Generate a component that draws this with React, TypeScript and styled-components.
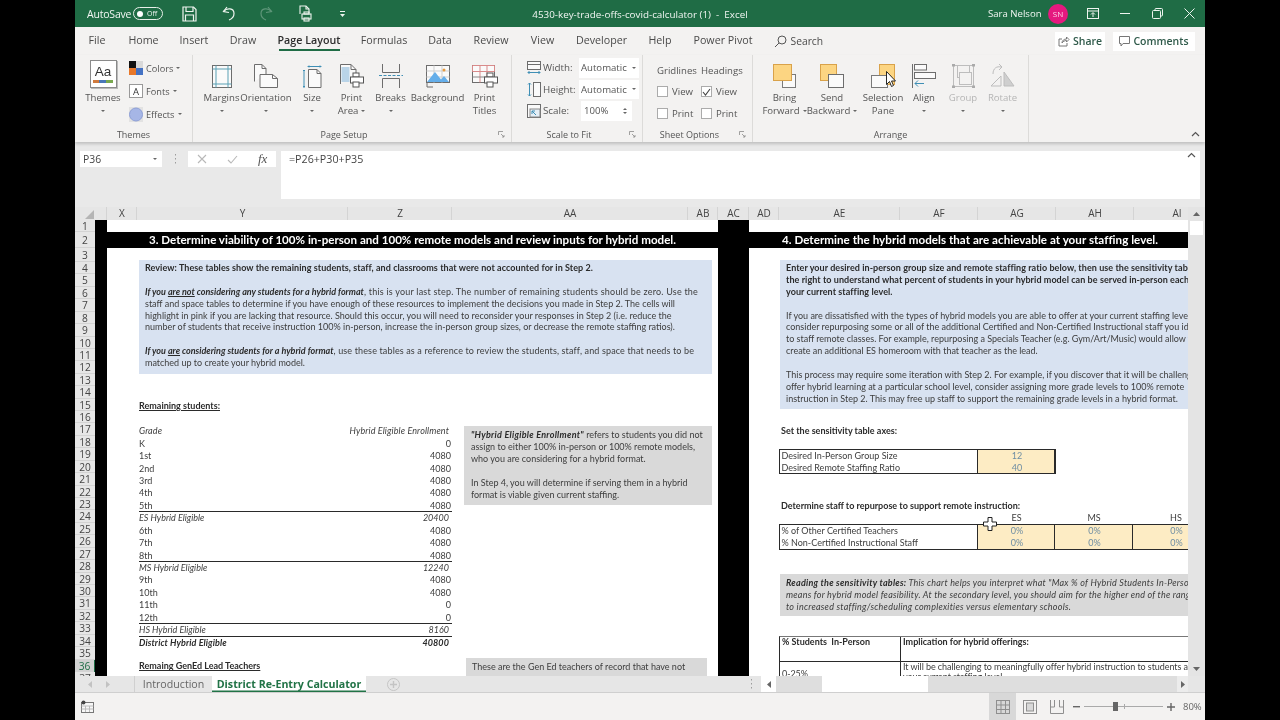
import React from 'react';
import styled, { createGlobalStyle } from 'styled-components';

const UI = `"Open Sans","Noto Sans",sans-serif`;
const CELL = `Lato,"Open Sans",sans-serif`;

const GlobalStyle = createGlobalStyle`
  html,body{margin:0;padding:0;background:#000;}
  *{box-sizing:border-box;}
`;

const Screen = styled.div`
  width:1280px;height:720px;background:#000;display:flex;justify-content:center;overflow:hidden;
`;
const Win = styled.div`
  position:relative;width:1130px;height:720px;background:#f3f2f1;display:flex;flex-direction:column;overflow:hidden;
  font-family:${UI};color:#444;filter:blur(0.3px);
`;

/* title bar */
const TitleBar = styled.div`
  height:27px;background:#1f6c45;color:#f2f6f3;display:flex;align-items:center;font-size:10.5px;position:relative;flex:none;
`;
const QuickItem = styled.div<{ $w: number; $o?: number }>`
  width:${p => p.$w}px;display:flex;justify-content:center;align-items:center;opacity:${p => p.$o ?? 1};flex:none;
`;
const AutoSave = styled.span`margin-left:12px;width:46px;flex:none;white-space:nowrap;letter-spacing:-0.2px;`;
const Toggle = styled.div`
  width:30px;height:13px;border:1px solid #e8efe9;border-radius:7px;display:flex;align-items:center;gap:4px;padding-left:3px;flex:none;
  font-size:7px;line-height:1;
`;
const Knob = styled.i`width:6px;height:6px;border-radius:50%;background:#fff;display:block;`;
const DocTitle = styled.div`
  position:absolute;left:0;right:0;text-align:center;font-size:9.85px;white-space:pre;pointer-events:none;
`;
const RightBox = styled.div`margin-left:auto;display:flex;align-items:center;`;
const UserName = styled.span`font-size:9.6px;width:60px;white-space:nowrap;`;
const Avatar = styled.div`
  width:20px;height:20px;border-radius:50%;background:#e5197f;color:#fbd3e6;font-size:8px;display:flex;align-items:center;justify-content:center;margin-right:9px;
`;

/* tabs */
const TabBar = styled.div`
  height:28px;display:flex;align-items:center;padding-left:12.5px;gap:22.5px;font-size:10.7px;flex:none;position:relative;color:#4a4a4a;
`;
const Tab = styled.div<{ $active?: boolean; $w: number }>`
  width:${p => p.$w}px;white-space:nowrap;text-align:center;position:relative;height:28px;line-height:27px;flex:none;display:flex;justify-content:center;
  font-weight:${p => (p.$active ? 600 : 400)};color:${p => (p.$active ? '#2d2d2d' : 'inherit')};
  ${p => p.$active && `&:after{content:"";position:absolute;left:0;right:0;bottom:4px;height:2px;background:#1f6c45;}`}
`;
const SearchBox = styled.div`display:flex;align-items:center;gap:4px;width:50px;flex:none;font-size:10.3px;margin-left:-1px;`;
const TabRight = styled.div`margin-left:auto;display:flex;gap:8px;margin-right:10px;margin-top:0;`;
const TopBtn = styled.div<{ $w: number }>`
  width:${p => p.$w}px;height:19px;background:#fff;display:flex;align-items:center;justify-content:center;gap:3px;
  font-size:10.5px;font-weight:600;color:#2f5a4a;white-space:nowrap;
`;

/* ribbon */
const Ribbon = styled.div`
  height:87px;display:flex;flex:none;box-shadow:0 2px 3px rgba(0,0,0,.18);position:relative;z-index:1;background:#f3f2f1;
`;
const Group = styled.div<{ $w?: number }>`
  ${p => (p.$w ? `width:${p.$w}px;flex:none;` : 'flex:1;')}
  display:flex;flex-direction:column;margin:0;position:relative;
  border-right:${p => (p.$w ? '1px solid #dcdbd9' : 'none')};
`;
const GroupBody = styled.div<{ $pad?: number }>`
  flex:1;display:flex;padding-left:${p => p.$pad ?? 0}px;min-height:0;
`;
const GroupFoot = styled.div`
  height:15px;display:flex;align-items:center;font-size:9px;color:#555;margin-bottom:0;padding-bottom:1px;
`;
const FootText = styled.div`flex:1;text-align:center;white-space:nowrap;`;
const Launcher = styled.div`width:12px;display:flex;justify-content:center;flex:none;margin-right:4px;`;
const BigBtn = styled.div<{ $w: number; $dim?: boolean }>`
  width:${p => p.$w}px;flex:none;display:flex;flex-direction:column;align-items:center;
  color:${p => (p.$dim ? '#b5b5b5' : '#555')};font-size:9.6px;
`;
const IconSlot = styled.div`height:36px;display:flex;align-items:flex-end;justify-content:center;padding-bottom:3px;flex:none;`;
const BtnLine = styled.div`height:13px;line-height:13px;white-space:nowrap;display:flex;align-items:center;gap:3px;`;
const Caret = styled.i`
  display:block;width:0;height:0;border-left:2px solid transparent;border-right:2px solid transparent;border-top:2.5px solid #666;flex:none;
`;
const ThemeStack = styled.div`display:flex;flex-direction:column;padding-top:5px;gap:7px;margin-left:8px;`;
const ThemeRow = styled.div`display:flex;align-items:center;gap:3px;height:16px;font-size:9.2px;color:#555;`;
const ThemeIcon = styled.div`
  width:27px;height:28px;border:1px solid #8a8a8a;background:#fff;box-shadow:1px 1px 0 #bbb;display:flex;flex-direction:column;align-items:center;
  justify-content:center;font-size:13.5px;line-height:13px;color:#333;font-family:"Liberation Sans",sans-serif;
`;
const ThemeStrip = styled.i`display:block;width:20px;height:2.5px;background:linear-gradient(90deg,#d07b3e 0 30%,#4a77b8 30% 65%,#79a84e 65%);margin-top:2px;`;
const FontA = styled.div`
  width:14px;height:14px;border:1px solid #999;background:#fff;display:flex;align-items:center;justify-content:center;font-size:9.5px;color:#333;
`;

/* scale to fit */
const ScaleCol = styled.div`display:flex;flex-direction:column;padding:2px 0 0 15px;gap:0;`;
const ScaleRow = styled.div`display:flex;align-items:center;height:21.5px;font-size:9.8px;color:#555;white-space:nowrap;`;
const ScaleLabel = styled.span`width:36px;flex:none;margin-left:2px;`;
const SelectBox = styled.div`
  width:60px;height:19.5px;background:#fff;display:flex;align-items:center;justify-content:space-between;padding:0 3px 0 2px;font-size:9.6px;flex:none;
`;
const SpinBox = styled(SelectBox)`width:51px;margin-left:2px;padding-left:3px;height:20px;`;
const Spin = styled.div`display:flex;flex-direction:column;gap:2px;margin-right:2px;`;
const CaretUp = styled(Caret)`border-top:none;border-bottom:2.5px solid #666;`;

/* sheet options */
const OptCols = styled.div`display:flex;padding:8px 0 0 14px;gap:6px;`;
const OptCol = styled.div<{ $w: number }>`width:${p => p.$w}px;display:flex;flex-direction:column;font-size:9.6px;color:#555;flex:none;`;
const OptHead = styled.div`height:15px;line-height:15px;margin-bottom:3px;white-space:nowrap;`;
const OptRow = styled.div`height:22px;display:flex;align-items:center;gap:4px;padding-bottom:1px;`;
const Check = styled.div`
  width:11px;height:11px;background:#fff;border:1px solid #ababab;display:flex;align-items:center;justify-content:center;flex:none;
`;

/* formula bar */
const FormulaArea = styled.div`
  height:65px;background:#e9e9e9;padding:9px 5px 8px 5px;display:flex;gap:5px;flex:none;
`;
const NameBox = styled.div`
  width:82px;height:16px;background:#fff;display:flex;align-items:center;justify-content:space-between;padding:0 5px 0 3px;font-size:10.4px;color:#444;flex:none;
`;
const Dots = styled.div`width:16px;height:16px;display:flex;align-items:center;justify-content:center;flex:none;`;
const FxBox = styled.div`
  width:88px;height:16px;background:#fff;display:flex;align-items:center;padding-left:9px;gap:20px;flex:none;margin-right:0;
`;
const FxText = styled.span`font-family:"Liberation Serif",serif;font-style:italic;font-size:13px;color:#555;`;
const FormulaBox = styled.div`
  flex:1;height:48px;background:#fff;display:flex;justify-content:space-between;padding:1px 4px 0 8px;font-size:10.7px;color:#444;
`;

/* sheet */
const SheetWrap = styled.div`height:469px;display:flex;flex:none;background:#e6e6e6;`;
const SheetMain = styled.div`width:1113px;flex:none;display:flex;flex-direction:column;`;
const ColHeads = styled.div`height:13px;display:flex;flex:none;background:#e6e6e6;overflow:hidden;`;
const Corner = styled.div`width:20px;flex:none;display:flex;justify-content:flex-end;align-items:flex-end;padding:0 1px 1px 0;`;
const ColHead = styled.div<{ $w: number }>`
  width:${p => p.$w}px;flex:none;text-align:center;font-size:10px;line-height:13px;color:#444;box-shadow:inset -1px 0 0 #d4d4d4;
`;
const SheetBody = styled.div`height:456px;display:flex;overflow:hidden;background:#fff;`;
const RowHeads = styled.div`width:20px;flex:none;background:#e6e6e6;display:flex;flex-direction:column;`;
const RowHead = styled.div<{ $h: number; $on?: boolean }>`
  height:${p => p.$h}px;flex:none;text-align:center;font-size:10.2px;line-height:${p => p.$h}px;color:${p => (p.$on ? '#1f6c45' : '#444')};
  background:${p => (p.$on ? '#d2d2d2' : 'transparent')};box-shadow:inset 0 -1px 0 #d3d3d3;
  ${p => p.$on && 'border-right:1.5px solid #1f6c45;'}
`;
const BlackCol = styled.div<{ $w: number }>`width:${p => p.$w}px;flex:none;background:#000;`;
const Panel = styled.div<{ $w: number }>`
  width:${p => p.$w}px;flex:none;display:flex;flex-direction:column;overflow:hidden;background:#fff;font-family:${CELL};
  font-size:9px;color:#3d3d3d;
`;
const Band = styled.div<{ $left?: number }>`
  margin-top:12px;height:16px;background:#000;color:#fff;font-weight:700;font-size:11.6px;line-height:16px;white-space:nowrap;flex:none;
  ${p => (p.$left ? `padding-left:${p.$left}px;letter-spacing:.04px;` : 'text-align:center;')}
`;
const InfoBox = styled.div<{ $ml: number; $w: string; $h: number; $pl?: number }>`
  margin:12px 0 0 ${p => p.$ml}px;width:${p => p.$w};height:${p => p.$h}px;background:#d8e2f1;padding:2px 0 0 ${p => p.$pl ?? 6}px;flex:none;overflow:hidden;
`;
const Line = styled.div<{ $ls?: number }>`
  height:11.9px;line-height:11.9px;white-space:nowrap;letter-spacing:${p => p.$ls ?? 0}px;
`;
const B = styled.b`font-weight:700;color:#2b2b2b;letter-spacing:0.06px;`;
const BI = styled.b`font-weight:700;font-style:italic;color:#2b2b2b;letter-spacing:0;`;
const NoteBI = styled(BI)`letter-spacing:0.28px;`;
const ReadBI = styled(BI)`letter-spacing:0.25px;`;
const U = styled.span`text-decoration:underline;`;
const Split = styled.div`display:flex;flex:none;margin-left:32px;`;
const TableCol = styled.div`width:313px;flex:none;display:flex;flex-direction:column;`;
const NoteCol = styled.div`flex:1;display:flex;flex-direction:column;margin-left:12px;`;
const Heading = styled.div<{ $mt?: number }>`
  height:12.43px;line-height:12.43px;font-weight:700;text-decoration:underline;color:#2b2b2b;white-space:nowrap;margin-top:${p => p.$mt ?? 0}px;flex:none;
`;
const SectionHead = styled(Heading)`margin-left:32px;margin-top:25.5px;`;
const EnrollRow = styled.div<{ $line?: boolean; $kind?: string }>`
  height:12.43px;line-height:13.4px;display:flex;justify-content:space-between;padding-right:1px;white-space:nowrap;flex:none;
  ${p => p.$line && 'box-shadow:0 1px 0 #2a2a2a;'}
  ${p => (p.$kind === 'it' || p.$kind === 'head') && 'font-style:italic;'}
  ${p => p.$kind === 'head' && 'letter-spacing:0.12px;'}
  ${p => p.$kind === 'bi' && 'font-style:italic;font-weight:700;color:#2b2b2b;letter-spacing:0.1px;'}
`;
const EnrollValue = styled.span<{ $pr?: number }>`padding-right:${p => p.$pr ?? 0}px;`;
const Note = styled.div`
  width:248px;height:79px;background:#d9d9d9;margin-top:2px;padding:3px 0 0 7px;flex:none;
`;
const Note2 = styled.div`
  width:241px;height:30px;background:#d9d9d9;margin:153px 0 0 2px;padding:3px 0 0 6px;flex:none;
`;
const StepHead = styled.div<{ $mt: number }>`
  margin:${p => p.$mt}px 0 0 32px;height:12.4px;line-height:12.4px;font-weight:700;color:#2b2b2b;white-space:nowrap;flex:none;
`;
const StaffGrid = styled.div<{ $cols: string; $mt: number }>`
  display:grid;grid-template-columns:${p => p.$cols};margin:${p => p.$mt}px 0 0 30px;flex:none;
  border:1px solid #2a2a2a;border-right:none;
`;
const AxisGrid = styled(StaffGrid)`width:277px;border-right:1px solid #2a2a2a;`;
const GridLabel = styled.div`height:11.7px;line-height:11.7px;padding-left:1.5px;white-space:nowrap;border-right:1px solid #2a2a2a;grid-column:1;`;
const Yellow = styled.div`
  height:11.7px;line-height:11.7px;background:#fdecc4;color:#6f8ea3;text-align:center;border-right:1px solid #2a2a2a;padding-left:2px;
`;
const HeadRow = styled.div`display:grid;grid-template-columns:199px 77px 78px 86px;margin-left:30px;height:12.4px;line-height:12.4px;flex:none;`;
const HeadCell = styled.div`text-align:center;`;
const ReadBox = styled.div`
  margin:24.5px 0 0 31px;height:42px;background:#d9d9d9;padding:3px 0 0 6px;font-style:italic;overflow:hidden;flex:none;
`;
const ImplGrid = styled.div`
  margin:19.5px 0 0 30px;display:grid;grid-template-columns:121px 1fr;border-top:1px solid #777;border-left:1px solid #2a2a2a;flex:none;
`;
const ImplCell = styled.div<{ $h: number; $first?: boolean; $bold?: boolean }>`
  height:${p => p.$h}px;padding:0 0 0 2px;white-space:pre;line-height:10px;letter-spacing:-0.07px;
  ${p => p.$first && 'border-right:1px solid #2a2a2a;'}
  ${p => p.$bold && 'font-weight:700;color:#2b2b2b;letter-spacing:0;'}
`;
const ImplFirst = styled(ImplCell)`display:flex;align-items:flex-end;`;
const HeaderBottom = styled.div`grid-column:1 / -1;height:1px;background:#2a2a2a;`;

const VScroll = styled.div`width:17px;flex:none;background:#e4e4e4;display:flex;flex-direction:column;align-items:center;`;
const VArrow = styled.div`height:14px;width:100%;display:flex;align-items:center;justify-content:center;flex:none;`;
const VThumb = styled.div`width:13px;height:14px;background:#fff;flex:none;`;
const VSpace = styled.div`flex:1;`;

/* tabs bar */
const SheetTabs = styled.div`height:17px;background:#e6e6e6;border-bottom:1px solid #cfcfcf;display:flex;align-items:stretch;flex:none;`;
const TabNav = styled.div`width:60px;display:flex;align-items:center;gap:14px;padding-left:13px;flex:none;border-right:1px solid #d0d0d0;`;
const SheetTab = styled.div<{ $on?: boolean; $w: number }>`
  width:${p => p.$w}px;flex:none;text-align:center;font-size:10.65px;line-height:16px;white-space:nowrap;
  ${p => (p.$on ? 'background:#fff;color:#217346;font-weight:700;box-shadow:inset 0 -1.5px 0 #217346;' : 'color:#666;')}
`;
const PlusWrap = styled.div`width:54px;display:flex;align-items:center;justify-content:center;flex:none;`;
const HDots = styled.div`margin-left:auto;width:19px;display:flex;align-items:center;justify-content:center;flex:none;`;
const ArrowBox = styled.div<{ $w: number; $bg?: string }>`
  width:${p => p.$w}px;background:${p => p.$bg ?? '#fff'};display:flex;align-items:center;justify-content:center;flex:none;
`;
const HTrack = styled.div`width:401px;background:#dedede;display:flex;flex:none;padding-left:46px;`;
const HThumb = styled.div`width:106px;background:#fff;`;
const HEnd = styled.div`width:17px;flex:none;`;

/* status bar */
const StatusBar = styled.div`flex:1;display:flex;align-items:stretch;background:#f3f2f1;`;
const MacroWrap = styled.div`width:27px;margin-left:6px;display:flex;align-items:center;`;
const StatusRight = styled.div`margin-left:auto;display:flex;align-items:center;height:100%;`;
const ViewBtn = styled.div<{ $on?: boolean; $w: number }>`
  width:${p => p.$w}px;height:100%;display:flex;align-items:center;justify-content:center;background:${p => (p.$on ? '#d8d8d8' : 'transparent')};flex:none;
`;
const Zoomer = styled.div`display:flex;align-items:center;gap:4px;margin-left:3px;`;
const SliderTrack = styled.div`width:79px;height:1px;background:#aaa;position:relative;`;
const SliderThumb = styled.i`position:absolute;left:29px;top:-4px;width:5px;height:9px;background:#666;display:block;`;
const SliderTick = styled.i`position:absolute;left:40px;top:-2px;width:1px;height:5px;background:#aaa;display:block;`;
const ZoomText = styled.span`font-size:9.5px;color:#666;width:16px;margin-left:4px;margin-right:6px;white-space:nowrap;`;
const PointerLayer = styled.div<{ $x: number; $y: number }>`
  position:absolute;left:${p => p.$x}px;top:${p => p.$y}px;pointer-events:none;z-index:5;
`;

/* ---------- icons ---------- */
const Save = () => (
  <svg width="15" height="16" viewBox="0 0 15 16" fill="none" stroke="#eef4ef" strokeWidth="1.2">
    <path d="M1 1h10.5L14 3.5V15H1z" /><path d="M4 1v4.5h7V1" /><path d="M3.5 15V9h8v6" />
  </svg>
);
const Undo = ({ flip }: { flip?: boolean }) => (
  <svg width="13" height="15" viewBox="0 0 13 15" fill="none" stroke="#eef4ef" strokeWidth="1.2" style={flip ? { transform: 'scaleX(-1)' } : undefined}>
    <path d="M5 1L1.500 5.500 7 6.500" /><path d="M1.500 5.500C5 1.500 12 2 12 7.500c0 3-2.500 5.500-5 6.500" />
  </svg>
);
const Preview = () => (
  <svg width="13" height="17" viewBox="0 0 13 17" fill="none" stroke="#eef4ef" strokeWidth="1.1">
    <path d="M1 9V1h6l3 3v4" /><path d="M7 1v3h3" /><rect x="3" y="9" width="9" height="5" /><rect x="5" y="7" width="5" height="2" /><rect x="5" y="13" width="5" height="3" />
  </svg>
);
const QaCaret = () => (
  <svg width="7" height="6" viewBox="0 0 7 6" fill="#eef4ef"><rect x="1" y="0" width="5" height="1" /><path d="M1 3h5L3.500 6z" /></svg>
);
const RibbonDisp = () => (
  <svg width="12" height="11" viewBox="0 0 12 11" fill="none" stroke="#eef4ef"><rect x=".5" y=".5" width="11" height="10" /><path d="M.5 3h11M6 9V5M4 6.500L6 4.500l2 2" /></svg>
);
const Min = () => <svg width="10" height="2" viewBox="0 0 10 2"><rect width="10" height="1" fill="#eef4ef" /></svg>;
const Restore = () => (
  <svg width="11" height="11" viewBox="0 0 11 11" fill="none" stroke="#eef4ef"><rect x=".5" y="2.500" width="8" height="8" rx="1" /><path d="M3 2.500V1.500a1 1 0 011-1h5.500a1 1 0 011 1V7a1 1 0 01-1 1h-1" /></svg>
);
const Close = () => (
  <svg width="11" height="11" viewBox="0 0 11 11" stroke="#eef4ef"><path d="M.5.5l10 10M10.500.5l-10 10" /></svg>
);
const SearchIco = () => (
  <svg width="13" height="13" viewBox="0 0 13 13" fill="none" stroke="#555"><circle cx="8" cy="5" r="4" /><path d="M5 8L1 12" /></svg>
);
const ShareIco = () => (
  <svg width="12" height="11" viewBox="0 0 12 11" fill="none" stroke="#777"><path d="M4 3H1v7h8V7" /><path d="M4 7c0-2.500 2-4 4.500-4V1L11 3.500 8.500 6V4.500C6.500 4.500 5 5.500 4 7z" /></svg>
);
const CommentIco = () => (
  <svg width="11" height="11" viewBox="0 0 11 11" fill="none" stroke="#777"><path d="M.5.500h10v7H4L2 10V7.500H.5z" /></svg>
);
const Launch = () => (
  <svg width="7" height="7" viewBox="0 0 7 7" fill="none" stroke="#8a8a8a" strokeWidth=".8"><path d="M.5 4V.5H5M3 3l3 3M6 4v2H4" /></svg>
);
const ChevUp = () => (
  <svg width="9" height="6" viewBox="0 0 9 6" fill="none" stroke="#555" strokeWidth="1.2"><path d="M1 5l3.500-3.500L8 5" /></svg>
);
const Colors = () => (
  <svg width="14" height="14" viewBox="0 0 14 14">
    <rect width="7" height="7" fill="#111" /><rect x="7" width="7" height="7" fill="#d9d9d9" /><rect y="7" width="7" height="7" fill="#e8782a" /><rect x="7" y="7" width="7" height="7" fill="#4472c4" />
  </svg>
);
const Effects = () => (
  <svg width="14" height="15" viewBox="0 0 14 15"><rect width="14" height="15" fill="#e2e2e2" /><circle cx="7" cy="7.500" r="6.500" fill="#a6b6e6" stroke="#8d9fd6" /></svg>
);
const Margins = () => (
  <svg width="20" height="23" viewBox="0 0 20 23" fill="#fafafa" stroke="#6d6d6d">
    <rect x=".5" y=".5" width="19" height="22" /><path d="M4 .5v22M16 .5v22M.5 4h19M.5 19h19" stroke="#5aa1b5" fill="none" />
  </svg>
);
const Orientation = () => (
  <svg width="24" height="24" viewBox="0 0 24 24" fill="#fafafa" stroke="#6d6d6d">
    <path d="M.5 17.500V.5H8l4 4V10" /><path d="M8 .5v4h4" fill="none" /><path d="M6 10.500h12.500l5 4v9H6z" /><path d="M18.500 10.500v4h5" fill="none" />
  </svg>
);
const SizeIco = () => (
  <svg width="19" height="23" viewBox="0 0 19 23" fill="none">
    <path d="M5.500 22.500V4.500H14l4 4v14z" fill="#fafafa" stroke="#6d6d6d" /><path d="M14 4.500v4h4" stroke="#6d6d6d" />
    <path d="M1 5v18M0 6l1-1 1 1M0 21l1 1 1-1M5 1.500h13M6 .5l-1 1 1 1M17 .5l1 1-1 1" stroke="#3f8fb5" />
  </svg>
);
const PrintArea = () => (
  <svg width="24" height="24" viewBox="0 0 24 24" fill="none">
    <path d="M.5 20V.5H11l5 5V10" fill="#fafafa" stroke="#6d6d6d" /><rect x="1.500" y="3" width="8" height="15" fill="#b9d4e8" /><path d="M11 .5v5h5" stroke="#6d6d6d" />
    <rect x="13" y="9" width="6" height="4" fill="#fff" stroke="#555" /><rect x="10.500" y="13" width="13" height="6" fill="#fff" stroke="#555" /><rect x="13" y="18" width="6" height="5" fill="#fff" stroke="#555" />
  </svg>
);
const Breaks = () => (
  <svg width="24" height="24" viewBox="0 0 24 24" fill="none" stroke="#6d6d6d">
    <path d="M3.500 0v8.500h17V0M3.500 24v-9.500h17V24" /><path d="M0 11.500h24" stroke="#3f8fb5" strokeDasharray="3 1.500" />
  </svg>
);
const Background = () => (
  <svg width="24" height="23" viewBox="0 0 24 23" fill="none">
    <rect x=".5" y=".5" width="23" height="17" fill="#fafafa" stroke="#6d6d6d" /><path d="M8 .5v17M16 .5v17M.5 6h23M.5 12h23" stroke="#cfcfcf" />
    <path d="M1 17L9 7l8 10z" fill="#64aeea" /><path d="M13 17l5-6 5 6z" fill="#64aeea" /><circle cx="18" cy="5" r="1.500" fill="#e79a3d" />
    <path d="M1 18v4h6" stroke="#6d6d6d" />
  </svg>
);
const PrintTitles = () => (
  <svg width="26" height="23" viewBox="0 0 26 23" fill="none">
    <rect x=".5" y=".5" width="22" height="17" fill="#fafafa" stroke="#6d6d6d" /><path d="M.5.5h22v6H.5zM8 .5v17M15 .5v17" stroke="#d98b8b" /><path d="M.5 12h15" stroke="#888" />
    <rect x="15" y="8" width="6" height="4" fill="#fff" stroke="#555" /><rect x="12.500" y="12" width="13" height="6" fill="#fff" stroke="#555" /><rect x="15" y="17" width="6" height="5" fill="#fff" stroke="#555" />
  </svg>
);
const Forward = () => (
  <svg width="24" height="24" viewBox="0 0 24 24">
    <rect x="9.500" y="10.500" width="13" height="13" fill="#fafafa" stroke="#7a7a7a" />
    <rect x=".5" y=".5" width="18" height="16" fill="#fcd582" stroke="#d9a24a" />
  </svg>
);
const Backward = () => (
  <svg width="24" height="24" viewBox="0 0 24 24">
    <rect x=".5" y=".5" width="16" height="16" fill="#fcd582" stroke="#d9a24a" />
    <rect x="8.500" y="10.500" width="15" height="13" fill="#fafafa" stroke="#6d6d6d" />
  </svg>
);
const Selection = () => (
  <svg width="24" height="24" viewBox="0 0 24 24">
    <rect x="8.500" y=".5" width="15" height="20" fill="#fcd582" stroke="#d9a24a" />
    <rect x=".5" y="11.500" width="16" height="12" fill="#fafafa" stroke="#7a7a7a" />
  </svg>
);
const Align = () => (
  <svg width="25" height="24" viewBox="0 0 25 24" fill="none" stroke="#6d6d6d">
    <path d="M.5 0v24" /><rect x="2.500" y=".5" width="12" height="5.500" fill="#fafafa" /><rect x="2.500" y="8.500" width="21" height="6" fill="#fafafa" />
    <path d="M12 19.500H3M6 16.500l-3 3 3 3" stroke="#3f8fb5" />
  </svg>
);
const GroupIco = () => (
  <svg width="23" height="24" viewBox="0 0 23 24" fill="none" stroke="#bdbdbd">
    <rect x="1.500" y="1.500" width="20" height="21" /><rect x="5.500" y="1.500" width="12" height="12" fill="#f3f2f1" /><rect x="7.500" y="8.500" width="12" height="12" fill="#f3f2f1" />
    <path d="M0 1h3M20 1h3M0 23h3M20 23h3" strokeWidth="3" stroke="#aaa" />
  </svg>
);
const Rotate = () => (
  <svg width="25" height="24" viewBox="0 0 25 24" fill="none" stroke="#bdbdbd">
    <path d="M3 10C3 4 7 2 11 3M9 0l3 3-3 3" /><path d="M1 22l10-10v10z" fill="#f3f2f1" /><path d="M14 22V8l10 14z" fill="#cfcfcf" />
  </svg>
);
const WidthIco = () => (
  <svg width="14" height="14" viewBox="0 0 14 14" fill="none">
    <rect x=".5" y=".5" width="13" height="8" stroke="#6d6d6d" fill="#fafafa" /><path d="M.5 3.500h13" stroke="#6d6d6d" />
    <path d="M1 11.500h12M2.500 10L1 11.500 2.500 13M11.500 10l1.500 1.500L11.500 13" stroke="#3f8fb5" />
  </svg>
);
const HeightIco = () => (
  <svg width="14" height="15" viewBox="0 0 14 15" fill="none">
    <rect x="6.500" y=".5" width="7" height="14" stroke="#6d6d6d" fill="#fafafa" />
    <path d="M2.500 1v13M1 2.500L2.500 1 4 2.500M1 12.500L2.500 14 4 12.500" stroke="#3f8fb5" />
  </svg>
);
const ScaleIco = () => (
  <svg width="14" height="14" viewBox="0 0 14 14" fill="none">
    <rect x=".5" y=".5" width="13" height="13" stroke="#6d6d6d" fill="#fafafa" /><rect x="3" y="5" width="10" height="8" fill="#e4eef6" stroke="#888" />
    <path d="M9 11L5 7M5 10V7h3" stroke="#3f8fb5" />
  </svg>
);
const CheckMark = () => (
  <svg width="9" height="8" viewBox="0 0 9 8" fill="none" stroke="#444" strokeWidth="1.1"><path d="M1 4l2.500 3L8 1" /></svg>
);
const VDots = () => (
  <svg width="3" height="10" viewBox="0 0 3 10" fill="#9c9c9c"><rect x="1" width="1" height="1.500" /><rect x="1" y="4" width="1" height="1.500" /><rect x="1" y="8" width="1" height="1.500" /></svg>
);
const XIco = () => (
  <svg width="10" height="10" viewBox="0 0 10 10" stroke="#b8b8b8" strokeWidth="1.1"><path d="M1 1l8 8M9 1l-8 8" /></svg>
);
const CheckIco = () => (
  <svg width="11" height="9" viewBox="0 0 11 9" fill="none" stroke="#b8b8b8" strokeWidth="1.1"><path d="M1 5l3 3 6-7" /></svg>
);
const CornerTri = () => <svg width="9" height="9" viewBox="0 0 9 9"><path d="M9 0v9H0z" fill="#b5b5b5" /></svg>;
const TriUp = () => <svg width="7" height="4" viewBox="0 0 7 4"><path d="M0 4L3.500 0 7 4z" fill="#666" /></svg>;
const TriDown = () => <svg width="7" height="4" viewBox="0 0 7 4"><path d="M0 0L3.500 4 7 0z" fill="#666" /></svg>;
const TriLeft = ({ c = '#666' }: { c?: string }) => <svg width="4" height="7" viewBox="0 0 4 7"><path d="M4 0L0 3.500 4 7z" fill={c} /></svg>;
const TriRight = ({ c = '#666' }: { c?: string }) => <svg width="4" height="7" viewBox="0 0 4 7"><path d="M0 0l4 3.500L0 7z" fill={c} /></svg>;
const PlusCircle = () => (
  <svg width="13" height="13" viewBox="0 0 13 13" fill="none" stroke="#c4c4c4"><circle cx="6.500" cy="6.500" r="6" /><path d="M6.500 3v7M3 6.500h7" strokeWidth="1.400" /></svg>
);
const Macro = () => (
  <svg width="13" height="13" viewBox="0 0 13 13" fill="none" stroke="#777">
    <rect x=".5" y="2.500" width="12" height="10" fill="#f7f7f7" /><path d="M4.500 6v6M8.500 6v6M.5 6h12M.5 9h12" stroke="#bbb" /><circle cx="2.500" cy="2.500" r="2" fill="#444" stroke="none" />
  </svg>
);
const NormalView = () => (
  <svg width="14" height="14" viewBox="0 0 14 14" fill="none" stroke="#8f8f8f"><rect x=".5" y=".5" width="13" height="13" /><path d="M5 .5v13M9.500 .5v13M.5 5h13M.5 9.500h13" /></svg>
);
const LayoutView = () => (
  <svg width="14" height="14" viewBox="0 0 14 14" fill="none" stroke="#8f8f8f"><rect x=".5" y=".5" width="13" height="13" /><rect x="3.500" y="3" width="7" height="8" fill="#d8d8d8" /></svg>
);
const BreakView = () => (
  <svg width="14" height="14" viewBox="0 0 14 14" fill="none" stroke="#8f8f8f"><path d="M.5 0v13.500h13V0M.5 7h4V0M9.500 0v7h4" /></svg>
);
const MinusS = () => <svg width="7" height="2" viewBox="0 0 7 2"><rect width="7" height="1.400" fill="#666" /></svg>;
const PlusS = () => <svg width="8" height="8" viewBox="0 0 8 8"><path d="M0 3.300h8v1.400H0zM3.300 0h1.400v8H3.300z" fill="#666" /></svg>;
const Arrow = () => (
  <svg width="11" height="17" viewBox="0 0 11 17"><path d="M.5.5v13l3-3 2 5 2-1-2-4.500h4z" fill="#fff" stroke="#111" strokeWidth=".9" /></svg>
);
const CrossCursor = () => (
  <svg width="14" height="14" viewBox="0 0 14 14"><path d="M5 .5h4V5h4.500v4H9v4.500H5V9H.5V5H5z" fill="#fff" stroke="#222" /></svg>
);

/* ---------- data ---------- */
const colHeads: [string, number][] = [
  ['', 12], ['X', 30], ['Y', 211], ['Z', 104], ['AA', 236], ['AB', 30], ['AC', 31], ['AD', 30], ['AE', 121], ['AF', 78], ['AG', 78], ['AH', 78], ['AI', 86],
];
const rowHeights = Array.from({ length: 37 }, (_, i) => (i === 0 ? 12 : i === 1 ? 16 : i === 2 ? 14 : 12.43));
const enroll: { l: string; v: string; line?: boolean; kind?: string; pr?: number }[] = [
  { l: 'Grade', v: 'Hybrid Eligible Enrollment', kind: 'head', pr: 2 },
  { l: 'K', v: '0' }, { l: '1st', v: '4080' }, { l: '2nd', v: '4080' }, { l: '3rd', v: '4080' }, { l: '4th', v: '4080' },
  { l: '5th', v: '4080', line: true },
  { l: 'ES Hybrid Eligible', v: '20400', kind: 'it', pr: 2 },
  { l: '6th', v: '4080' }, { l: '7th', v: '4080' }, { l: '8th', v: '4080', line: true },
  { l: 'MS Hybrid Eligible', v: '12240', kind: 'it', pr: 2 },
  { l: '9th', v: '4080' }, { l: '10th', v: '4080' }, { l: '11th', v: '0' }, { l: '12th', v: '0', line: true },
  { l: 'HS Hybrid Eligible', v: '8160', kind: 'it', pr: 2, line: true },
  { l: 'District Hybrid Eligible', v: '40800', kind: 'bi', pr: 2 },
];

const Big = ({ w, icon, l1, l2, caret, dim }: { w: number; icon: React.ReactNode; l1: string; l2?: string; caret?: boolean; dim?: boolean }) => (
  <BigBtn $w={w} $dim={dim}>
    <IconSlot>{icon}</IconSlot>
    <BtnLine>{l1}</BtnLine>
    <BtnLine>{l2}{caret && <Caret />}</BtnLine>
  </BigBtn>
);

const App = () => (
  <Screen>
    <GlobalStyle />
    <Win>
      <TitleBar>
        <DocTitle>4530-key-trade-offs-covid-calculator (1)  -  Excel</DocTitle>
        <AutoSave>AutoSave</AutoSave>
        <Toggle><Knob />Off</Toggle>
        <QuickItem $w={52}><Save /></QuickItem>
        <QuickItem $w={26}><Undo /></QuickItem>
        <QuickItem $w={51} $o={0.3}><Undo flip /></QuickItem>
        <QuickItem $w={26}><Preview /></QuickItem>
        <QuickItem $w={48}><QaCaret /></QuickItem>
        <RightBox>
          <UserName>Sara Nelson</UserName>
          <Avatar>SN</Avatar>
          <QuickItem $w={32}><RibbonDisp /></QuickItem>
          <QuickItem $w={32}><Min /></QuickItem>
          <QuickItem $w={32}><Restore /></QuickItem>
          <QuickItem $w={32}><Close /></QuickItem>
        </RightBox>
      </TitleBar>

      <TabBar>
        <Tab $w={19}>File</Tab>
        <Tab $w={29}>Home</Tab>
        <Tab $w={27}>Insert</Tab>
        <Tab $w={26}>Draw</Tab>
        <Tab $w={61} $active>Page Layout</Tab>
        <Tab $w={44}>Formulas</Tab>
        <Tab $w={23}>Data</Tab>
        <Tab $w={34}>Review</Tab>
        <Tab $w={24}>View</Tab>
        <Tab $w={49}>Developer</Tab>
        <Tab $w={23}>Help</Tab>
        <Tab $w={58}>Power Pivot</Tab>
        <SearchBox><SearchIco />Search</SearchBox>
        <TabRight>
          <TopBtn $w={50}><ShareIco />Share</TopBtn>
          <TopBtn $w={82}><CommentIco />Comments</TopBtn>
        </TabRight>
      </TabBar>

      <Ribbon>
        <Group $w={118}>
          <GroupBody $pad={10}>
            <BigBtn $w={36}>
              <IconSlot><ThemeIcon>Aa<ThemeStrip /></ThemeIcon></IconSlot>
              <BtnLine>Themes</BtnLine>
              <BtnLine><Caret /></BtnLine>
            </BigBtn>
            <ThemeStack>
              <ThemeRow><Colors />Colors<Caret /></ThemeRow>
              <ThemeRow><FontA>A</FontA>Fonts<Caret /></ThemeRow>
              <ThemeRow><Effects />Effects<Caret /></ThemeRow>
            </ThemeStack>
          </GroupBody>
          <GroupFoot><FootText>Themes</FootText></GroupFoot>
        </Group>
        <Group $w={319}>
          <GroupBody $pad={10}>
            <Big w={37} icon={<Margins />} l1="Margins" caret />
            <Big w={52} icon={<Orientation />} l1="Orientation" caret />
            <Big w={40} icon={<SizeIco />} l1="Size" caret />
            <Big w={39} icon={<PrintArea />} l1="Print" l2="Area" caret />
            <Big w={39} icon={<Breaks />} l1="Breaks" caret />
            <Big w={55} icon={<Background />} l1="Background" />
            <Big w={39} icon={<PrintTitles />} l1="Print" l2="Titles" />
          </GroupBody>
          <GroupFoot><FootText>Page Setup</FootText><Launcher><Launch /></Launcher></GroupFoot>
        </Group>
        <Group $w={131}>
          <GroupBody>
            <ScaleCol>
              <ScaleRow><WidthIco /><ScaleLabel>Width:</ScaleLabel><SelectBox>Automatic<Caret /></SelectBox></ScaleRow>
              <ScaleRow><HeightIco /><ScaleLabel>Height:</ScaleLabel><SelectBox>Automatic<Caret /></SelectBox></ScaleRow>
              <ScaleRow><ScaleIco /><ScaleLabel>Scale:</ScaleLabel><SpinBox>100%<Spin><CaretUp /><Caret /></Spin></SpinBox></ScaleRow>
            </ScaleCol>
          </GroupBody>
          <GroupFoot><FootText>Scale to Fit</FootText><Launcher><Launch /></Launcher></GroupFoot>
        </Group>
        <Group $w={110}>
          <GroupBody>
            <OptCols>
              <OptCol $w={38}>
                <OptHead>Gridlines</OptHead>
                <OptRow><Check />View</OptRow>
                <OptRow><Check />Print</OptRow>
              </OptCol>
              <OptCol $w={44}>
                <OptHead>Headings</OptHead>
                <OptRow><Check><CheckMark /></Check>View</OptRow>
                <OptRow><Check />Print</OptRow>
              </OptCol>
            </OptCols>
          </GroupBody>
          <GroupFoot><FootText>Sheet Options</FootText><Launcher><Launch /></Launcher></GroupFoot>
        </Group>
        <Group $w={276}>
          <GroupBody $pad={8}>
            <Big w={47} icon={<Forward />} l1="Bring" l2="Forward" caret />
            <Big w={48} icon={<Backward />} l1="Send" l2="Backward" caret />
            <Big w={54} icon={<Selection />} l1="Selection" l2="Pane" />
            <Big w={28} icon={<Align />} l1="Align" caret />
            <Big w={50} icon={<GroupIco />} l1="Group" caret dim />
            <Big w={29} icon={<Rotate />} l1="Rotate" caret dim />
          </GroupBody>
          <GroupFoot><FootText>Arrange</FootText></GroupFoot>
        </Group>
        <Group>
          <GroupBody />
          <GroupFoot><FootText /><Launcher><ChevUp /></Launcher></GroupFoot>
        </Group>
      </Ribbon>

      <FormulaArea>
        <NameBox>P36<Caret /></NameBox>
        <Dots><VDots /></Dots>
        <FxBox><XIco /><CheckIco /><FxText>fx</FxText></FxBox>
        <FormulaBox><span>=P26+P30+P35</span><ChevUp /></FormulaBox>
      </FormulaArea>

      <SheetWrap>
        <SheetMain>
          <ColHeads>
            <Corner><CornerTri /></Corner>
            {colHeads.map(([n, w], i) => <ColHead key={i} $w={w}>{n}</ColHead>)}
          </ColHeads>
          <SheetBody>
            <RowHeads>
              {rowHeights.map((h, i) => <RowHead key={i} $h={h} $on={i === 35}>{i + 1}</RowHead>)}
            </RowHeads>
            <BlackCol $w={12} />
            <Panel $w={611}>
              <Band>3. Determine viability of 100% in-person and 100% remote models and review inputs for hybrid model.</Band>
              <InfoBox $ml={32} $w="573px" $h={114}>
                <Line><B>Review: These tables show the remaining students, staff, and classrooms that were not accounted for in Step 2.</B></Line>
                <Line />
                <Line $ls={0.22}><BI>If you <U>are not</U> considering any students for a hybrid format</BI>, this is your last step. The number of remaining students should be zero. Use the</Line>
                <Line>staff and space tables to determine if you have enough of these resources to implement the decisions you made in Step 2. The cells will</Line>
                <Line>highlight in pink if you are lacking that resource. Should this occur, you will need to reconsider your responses in Step 2 (i.e. reduce the</Line>
                <Line>number of students that receive instruction 100% in-person, increase the in-person group sizes, or decrease the remote staffing ratios).</Line>
                <Line />
                <Line $ls={0.14}><BI>If you <U>are</U> considering students for a hybrid format</BI>, use these tables as a reference to review the students, staff, and space that needs to be</Line>
                <Line>matched up to create your hybrid model.</Line>
              </InfoBox>
              <SectionHead>Remaining students:</SectionHead>
              <Split>
                <TableCol>
                  <EnrollRow />
                  {enroll.map((r, i) => (
                    <EnrollRow key={i} $line={r.line} $kind={r.kind}>
                      <span>{r.l}</span><EnrollValue $pr={r.pr}>{r.v}</EnrollValue>
                    </EnrollRow>
                  ))}
                  <Heading $mt={12.43}>Remaing GenEd Lead Teachers</Heading>
                </TableCol>
                <NoteCol>
                  <EnrollRow />
                  <Note>
                    <Line><NoteBI>"Hybrid Eligible Enrollment"</NoteBI> refers to students you did not</Line>
                    <Line>assign to either 100% in-person or 100% remote models,</Line>
                    <Line>who you are considering for a hybrid format.</Line>
                    <Line />
                    <Line>In Step 4, you will determine if serving them in a hybrid</Line>
                    <Line>format is viable given current staffing.</Line>
                  </Note>
                  <Note2>
                    <Line>These are the Gen Ed teachers of record that have not</Line>
                  </Note2>
                </NoteCol>
              </Split>
            </Panel>
            <BlackCol $w={31} />
            <Panel $w={439}>
              <Band $left={33}>4. Determine the hybrid models that are achievable at your staffing level.</Band>
              <InfoBox $ml={31} $w="408px" $h={149}>
                <Line><B>Enter your desired in-person group size and remote staffing ratio below, then use the sensitivity tables to</B></Line>
                <Line><B>the right to understand what percent of students in your hybrid model can be served in-person each day at</B></Line>
                <Line><B>your current staffing level.</B></Line>
                <Line />
                <Line>If you are dissatisfied with the types of hybrid models you are able to offer at your current staffing level,</Line>
                <Line>consider repurposing some or all of the additional Certified and Non-Certified Instructional staff you identified</Line>
                <Line>to staff remote classes. For example, repurposing a Specials Teacher (e.g. Gym/Art/Music) would allow you to</Line>
                <Line>create an additional ES homeroom with that teacher as the lead.</Line>
                <Line />
                <Line>This process may require some iteration with Step 2. For example, if you discover that it will be challenging to</Line>
                <Line>offer hybrid learning at a particular school level, consider assigning more grade levels to 100% remote</Line>
                <Line>instruction in Step 2. This may free up staff to support the remaining grade levels in a hybrid format.</Line>
              </InfoBox>
              <StepHead $mt={16}>Set the sensitivity table axes:</StepHead>
              <AxisGrid $cols="198px 77px" $mt={11.6}>
                <GridLabel>Desired In-Person Group Size</GridLabel><Yellow>12</Yellow>
                <GridLabel>Desired Remote Staffing Ratio</GridLabel><Yellow>40</Yellow>
              </AxisGrid>
              <StepHead $mt={25.3}>Determine staff to repurpose to support remote instruction:</StepHead>
              <HeadRow><span /><HeadCell>ES</HeadCell><HeadCell>MS</HeadCell><HeadCell>HS</HeadCell></HeadRow>
              <StaffGrid $cols="198px 77px 78px 86px" $mt={0}>
                <GridLabel>% of Other Certified Teachers</GridLabel><Yellow>0%</Yellow><Yellow>0%</Yellow><Yellow>0%</Yellow>
                <GridLabel>% Non-Certified Instructional Staff</GridLabel><Yellow>0%</Yellow><Yellow>0%</Yellow><Yellow>0%</Yellow>
              </StaffGrid>
              <ReadBox>
                <Line $ls={0.22}><ReadBI>Reading the sensitivity tables:</ReadBI> This chart helps you interpret what "Max % of Hybrid Students In-Person"</Line>
                <Line $ls={0.22}>means for hybrid model feasibility. At the secondary level, you should aim for the higher end of the range due</Line>
                <Line $ls={0.24}>to increased staffing/scheduling complexities versus elementary schools.</Line>
              </ReadBox>
              <ImplGrid>
                <ImplCell $h={24} $first $bold>% Students  In-Person</ImplCell>
                <ImplCell $h={24} $bold>Implication for hybrid offerings:</ImplCell>
                <HeaderBottom />
                <ImplFirst $h={17} $first>0-25%</ImplFirst>
                <ImplCell $h={17}>It will be challenging to meaningfully offer hybrid instruction to students at{'\n'}your current staffing level.</ImplCell>
              </ImplGrid>
            </Panel>
          </SheetBody>
        </SheetMain>
        <VScroll>
          <VArrow><TriUp /></VArrow>
          <VThumb />
          <VSpace />
          <VArrow><TriDown /></VArrow>
        </VScroll>
      </SheetWrap>

      <SheetTabs>
        <TabNav><TriLeft c="#c2c2c2" /><TriRight c="#c2c2c2" /></TabNav>
        <SheetTab $w={77}>Introduction</SheetTab>
        <SheetTab $w={154} $on>District Re-Entry Calculator</SheetTab>
        <PlusWrap><PlusCircle /></PlusWrap>
        <HDots><VDots /></HDots>
        <ArrowBox $w={15}><TriLeft /></ArrowBox>
        <HTrack><HThumb /></HTrack>
        <ArrowBox $w={11} $bg="#ececec"><TriRight /></ArrowBox>
        <HEnd />
      </SheetTabs>

      <StatusBar>
        <MacroWrap><Macro /></MacroWrap>
        <StatusRight>
          <ViewBtn $on $w={27}><NormalView /></ViewBtn>
          <ViewBtn $w={27}><LayoutView /></ViewBtn>
          <ViewBtn $w={27}><BreakView /></ViewBtn>
          <Zoomer>
            <MinusS />
            <SliderTrack><SliderThumb /><SliderTick /></SliderTrack>
            <PlusS />
            <ZoomText>80%</ZoomText>
          </Zoomer>
        </StatusRight>
      </StatusBar>

      <PointerLayer $x={811} $y={71}><Arrow /></PointerLayer>
      <PointerLayer $x={908} $y={514}><CrossCursor /></PointerLayer>
    </Win>
  </Screen>
);

export default App;
